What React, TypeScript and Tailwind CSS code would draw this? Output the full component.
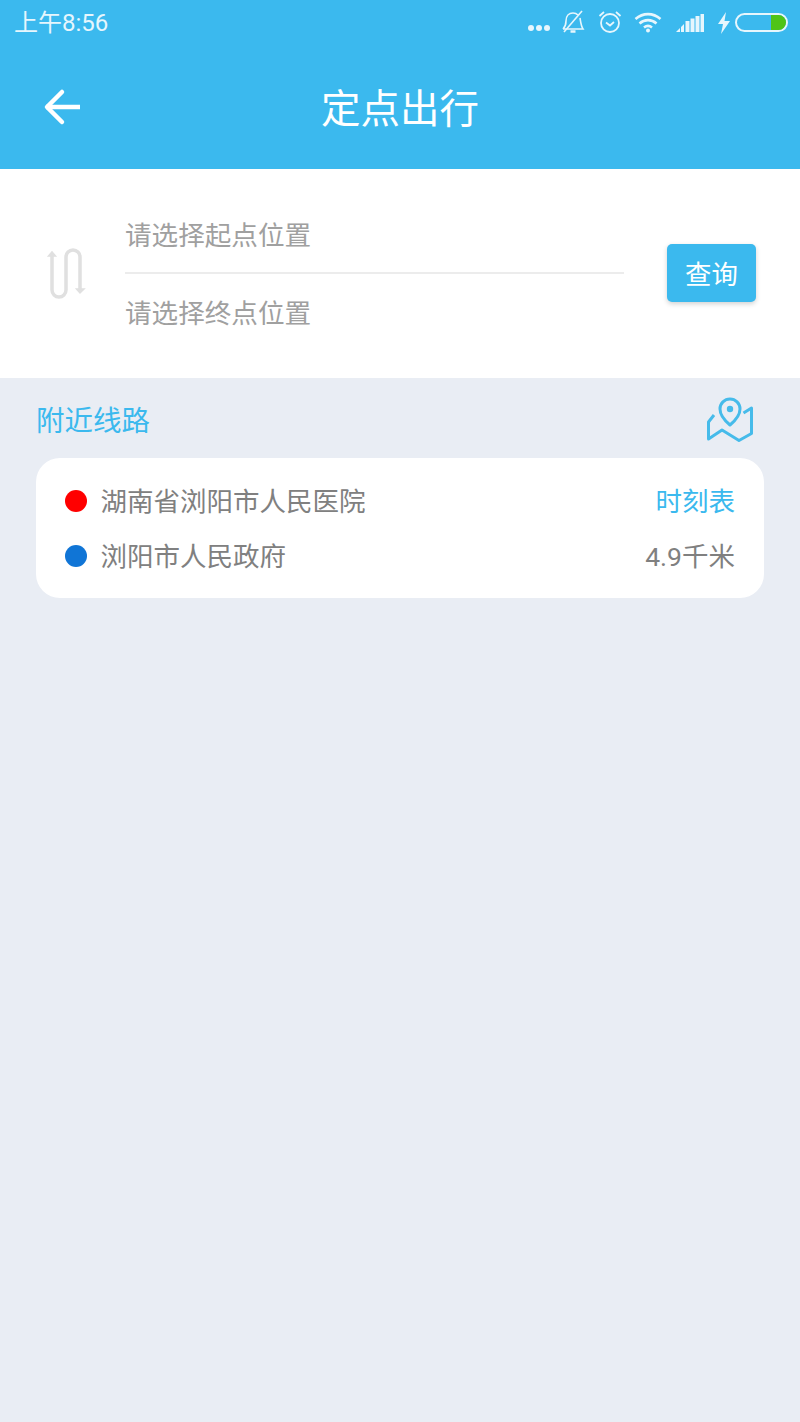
const FONT = "font-['Roboto','Noto_Sans_CJK_SC',sans-serif]"

function StatusIcons() {
  return (
    <div className="flex items-center text-[#e6f6fd]">
      <div className="mr-[10px] mt-[10px] flex gap-[2px]">
        <span className="h-[6px] w-[6px] rounded-full bg-[#e6f6fd]" />
        <span className="h-[6px] w-[6px] rounded-full bg-[#e6f6fd]" />
        <span className="h-[6px] w-[6px] rounded-full bg-[#e6f6fd]" />
      </div>
      <svg width="26" height="26" viewBox="0 0 26 26" fill="none" stroke="currentColor" strokeWidth="1.6" className="mb-[3px] mr-[11px]">
        <path d="M3 20c2-2 3-4 3-8 0-5 3-8 7-8 2 0 4 1 5 2M20 9c.5 3 1 8 3 11H3" />
        <path d="M4 23 22 2" />
        <path d="M10.500 22.500h5" strokeWidth="2.500" />
      </svg>
      <svg width="26" height="26" viewBox="0 0 26 26" fill="none" stroke="currentColor" strokeWidth="1.8" className="mb-[3px] mr-[11px]">
        <circle cx="13" cy="14" r="9" />
        <path d="M9 13.500l4 3 4-3.500" />
        <path d="M2.500 7 7 3M23.500 7 19 3" />
      </svg>
      <svg width="28" height="22" viewBox="0 0 28 22" fill="none" stroke="currentColor" strokeWidth="2.600" className="mb-[2px] mr-[14px]">
        <path d="M1.500 8C9 1.500 19 1.500 26.500 8" />
        <path d="M5.500 12.500c5-4.500 12-4.500 17 0" />
        <path d="M10 16.500c2.500-2 5.500-2 8 0" />
        <circle cx="14" cy="19.500" r="2" fill="currentColor" stroke="none" />
      </svg>
      <svg width="28" height="20" viewBox="0 0 28 20" fill="currentColor" className="mr-[13px]">
        <path d="M0 19l4-4v4zM5 14l3-3v8H5z" />
        <rect x="9.500" y="8" width="4" height="11" />
        <rect x="14.500" y="5.500" width="4" height="13.500" />
        <rect x="19.500" y="3" width="4" height="16" />
        <rect x="24.500" y="1" width="3.500" height="18" />
      </svg>
      <svg width="14" height="22" viewBox="0 0 14 22" fill="currentColor" className="mr-[4px]">
        <path d="M9 0 1 12h5l-2 10 9-13H7.500z" />
      </svg>
      <div className="relative mb-[2px] h-[19px] w-[53px] rounded-full border-2 border-[#e6f6fd]">
        <div className="absolute bottom-0 right-0 top-0 w-[15px] rounded-r-full bg-[#4fc417]" />
      </div>
    </div>
  )
}

export default function App() {
  return (
    <div className={`flex min-h-[1422px] w-[800px] flex-col bg-[#e9edf4] ${FONT}`}>
      <header className="h-[169px] bg-[#3bb9ee]">
        <div className="flex h-[46px] items-center justify-between pl-[14px] pr-[12px]">
          <span className="text-[24px] leading-none text-[#e6f6fd]">上午8:56</span>
          <StatusIcons />
        </div>
        <div className="relative flex h-[123px] items-center justify-center pt-[4px]">
          <svg width="40" height="38" viewBox="0 0 40 38" fill="none" stroke="#fff" strokeWidth="4.500" strokeLinecap="round" strokeLinejoin="round" className="absolute left-[43px] top-[42px]">
            <path d="M37 19H3" strokeLinecap="butt" />
            <path d="M19 4 4 19l15 15" />
          </svg>
          <h1 className="text-[39.5px] font-normal leading-none text-white">定点出行</h1>
        </div>
      </header>

      <section className="flex h-[209px] items-center bg-white pl-[46px] pr-[44px]">
        <svg width="40" height="54" viewBox="0 0 40 54" fill="none" stroke="#e0e0e0" strokeWidth="3.500" strokeLinecap="round" className="shrink-0">
          <path d="M6 9v34a7 7 0 0 0 14 0V10a7 7 0 0 1 14 0v33" />
          <path d="M2.500 9 6 5l3.500 4zM30.500 42H38L34 46z" fill="#e0e0e0" strokeWidth="1.500" />
        </svg>
        <div className="mb-[6px] ml-[39px] w-[499px] shrink-0 text-[26.6px] leading-[26px] text-[#a0a0a0]">
          <div className="h-[59px] border-b-2 border-[#ececec] pt-[8px]">请选择起点位置</div>
          <div className="pt-[27px]">请选择终点位置</div>
        </div>
        <button className="mb-[2px] ml-auto flex h-[58px] w-[89px] items-center justify-center rounded-[5px] bg-[#3bb9ee] pt-[5px] text-[26.4px] leading-none text-white shadow-[0_2px_5px_rgba(0,0,0,0.18)]">
          查询
        </button>
      </section>

      <div className="flex h-[80px] items-center justify-between pl-[36px] pr-[47px] pt-[5px]">
        <span className="pt-[4px] text-[28.5px] leading-none text-[#3bb9ee]">附近线路</span>
        <svg width="46" height="46" viewBox="0 0 46 46" fill="none" stroke="#46bbea" strokeWidth="3" strokeLinejoin="round" className="mb-[3px]">
          <path d="M23 29c-6-5-10-10-10-16a10 10 0 0 1 20 0c0 6-4 11-10 16z" />
          <circle cx="23" cy="13" r="3.200" fill="#46bbea" stroke="none" />
          <path d="M7 19l-5.500 7v17L15 34l17 10.500 12.500-7V12l-8 5" />
        </svg>
      </div>

      <section className="ml-[35.5px] mr-[36px] flex h-[140px] flex-col justify-center gap-[25px] rounded-[24px] bg-white pl-[29px] pr-[29px] text-[26.5px] leading-[28px] text-[#808080]">
        <div className="flex items-center">
          <span className="h-[22px] w-[22px] rounded-full bg-[#ff0000]" />
          <span className="ml-[14px] pt-[2px]">湖南省浏阳市人民医院</span>
          <span className="ml-auto pt-[2px] text-[#3bb9ee]">时刻表</span>
        </div>
        <div className="flex items-center">
          <span className="h-[22px] w-[22px] rounded-full bg-[#1075d6]" />
          <span className="ml-[14px] pt-[2px]">浏阳市人民政府</span>
          <span className="ml-auto pt-[2px]">4.9千米</span>
        </div>
      </section>
    </div>
  )
}
